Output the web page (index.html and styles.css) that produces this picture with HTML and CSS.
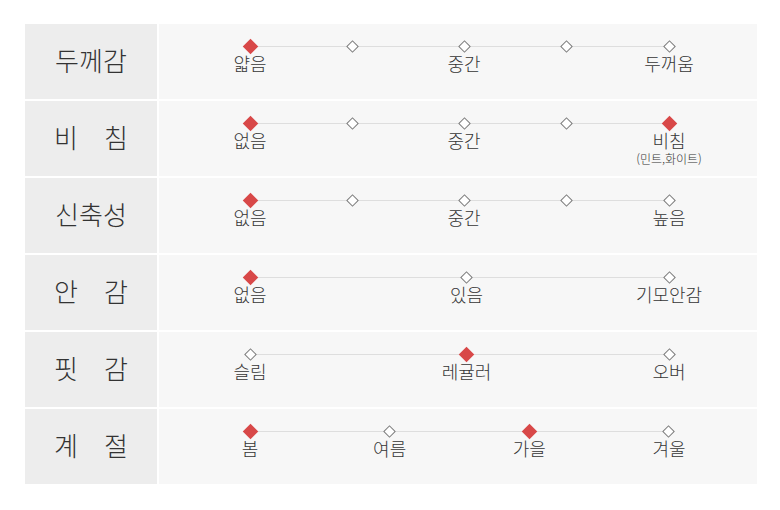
FILE: index.html
```html
<!DOCTYPE html>
<html lang="ko">
<head>
<meta charset="utf-8">
<title>상품 정보</title>
<link rel="stylesheet" href="styles.css">
</head>
<body>
<div class="info">
  <div class="row">
    <div class="head">두께감</div>
    <div class="cell">
      <div class="scale five">
        <div class="pt on"><span class="mark"><i class="dia"></i></span><span class="lbl">얇음</span></div>
        <div class="pt"><span class="mark"><i class="dia"></i></span></div>
        <div class="pt"><span class="mark"><i class="dia"></i></span><span class="lbl">중간</span></div>
        <div class="pt"><span class="mark"><i class="dia"></i></span></div>
        <div class="pt"><span class="mark"><i class="dia"></i></span><span class="lbl">두꺼움</span></div>
      </div>
    </div>
  </div>
  <div class="row">
    <div class="head">비　침</div>
    <div class="cell">
      <div class="scale five">
        <div class="pt on"><span class="mark"><i class="dia"></i></span><span class="lbl">없음</span></div>
        <div class="pt"><span class="mark"><i class="dia"></i></span></div>
        <div class="pt"><span class="mark"><i class="dia"></i></span><span class="lbl">중간</span></div>
        <div class="pt"><span class="mark"><i class="dia"></i></span></div>
        <div class="pt on"><span class="mark"><i class="dia"></i></span><span class="lbl">비침</span><span class="sub">(민트,화이트)</span></div>
      </div>
    </div>
  </div>
  <div class="row">
    <div class="head">신축성</div>
    <div class="cell">
      <div class="scale five">
        <div class="pt on"><span class="mark"><i class="dia"></i></span><span class="lbl">없음</span></div>
        <div class="pt"><span class="mark"><i class="dia"></i></span></div>
        <div class="pt"><span class="mark"><i class="dia"></i></span><span class="lbl">중간</span></div>
        <div class="pt"><span class="mark"><i class="dia"></i></span></div>
        <div class="pt"><span class="mark"><i class="dia"></i></span><span class="lbl">높음</span></div>
      </div>
    </div>
  </div>
  <div class="row">
    <div class="head">안　감</div>
    <div class="cell">
      <div class="scale three">
        <div class="pt on"><span class="mark"><i class="dia"></i></span><span class="lbl">없음</span></div>
        <div class="pt"><span class="mark"><i class="dia"></i></span><span class="lbl">있음</span></div>
        <div class="pt"><span class="mark"><i class="dia"></i></span><span class="lbl">기모안감</span></div>
      </div>
    </div>
  </div>
  <div class="row">
    <div class="head">핏　감</div>
    <div class="cell">
      <div class="scale three">
        <div class="pt"><span class="mark"><i class="dia"></i></span><span class="lbl">슬림</span></div>
        <div class="pt on"><span class="mark"><i class="dia"></i></span><span class="lbl">레귤러</span></div>
        <div class="pt"><span class="mark"><i class="dia"></i></span><span class="lbl">오버</span></div>
      </div>
    </div>
  </div>
  <div class="row">
    <div class="head">계　절</div>
    <div class="cell">
      <div class="scale four">
        <div class="pt on"><span class="mark"><i class="dia"></i></span><span class="lbl">봄</span></div>
        <div class="pt"><span class="mark"><i class="dia"></i></span><span class="lbl">여름</span></div>
        <div class="pt on"><span class="mark"><i class="dia"></i></span><span class="lbl">가을</span></div>
        <div class="pt"><span class="mark"><i class="dia"></i></span><span class="lbl">겨울</span></div>
      </div>
    </div>
  </div>
</div>
</body>
</html>
```
FILE: styles.css
```css
html, body {
  margin: 0;
  padding: 0;
  background: #ffffff;
}

body {
  padding: 24px 23px 0 25px;
  font-family: "Noto Sans CJK KR", "Noto Sans", sans-serif;
  font-weight: 300;
  color: #333333;
}

.info {
  display: flex;
  flex-direction: column;
  gap: 2px;
  width: 732px;
}

.row {
  display: grid;
  grid-template-columns: 132px 1fr;
  gap: 2px;
  height: 75px;
}

.head {
  background: #ededed;
  display: flex;
  align-items: center;
  justify-content: center;
  font-size: 26px;
  line-height: 30px;
  color: #333333;
  padding-bottom: 4px;
  box-sizing: border-box;
}

.cell {
  background: #f7f7f7;
  padding: 15px 88px 0 91px;
}

.scale {
  position: relative;
  display: flex;
  justify-content: space-between;
}

.scale::before {
  content: "";
  position: absolute;
  left: 0;
  right: 0;
  top: 7px;
  height: 1px;
  background: #dedede;
}

.pt {
  position: relative;
  width: 0;
  display: flex;
  flex-direction: column;
  align-items: center;
}

.five .pt:nth-child(3) {
  margin-left: 9px;
}

.three .pt:nth-child(2) {
  margin-left: 14px;
}

.mark {
  height: 14px;
  width: 14px;
  display: flex;
  align-items: center;
  justify-content: center;
}

.dia {
  display: block;
  width: 9px;
  height: 9px;
  box-sizing: border-box;
  border: 1px solid #7a7a7a;
  background: #ffffff;
  transform: rotate(45deg);
}

.on .dia {
  width: 11px;
  height: 11px;
  border: none;
  background: #d84848;
}

.lbl {
  white-space: nowrap;
  font-size: 18px;
  line-height: 20px;
  color: #353535;
}

.sub {
  white-space: nowrap;
  margin-top: 2px;
  font-size: 12px;
  line-height: 14px;
  color: #353535;
}
```
